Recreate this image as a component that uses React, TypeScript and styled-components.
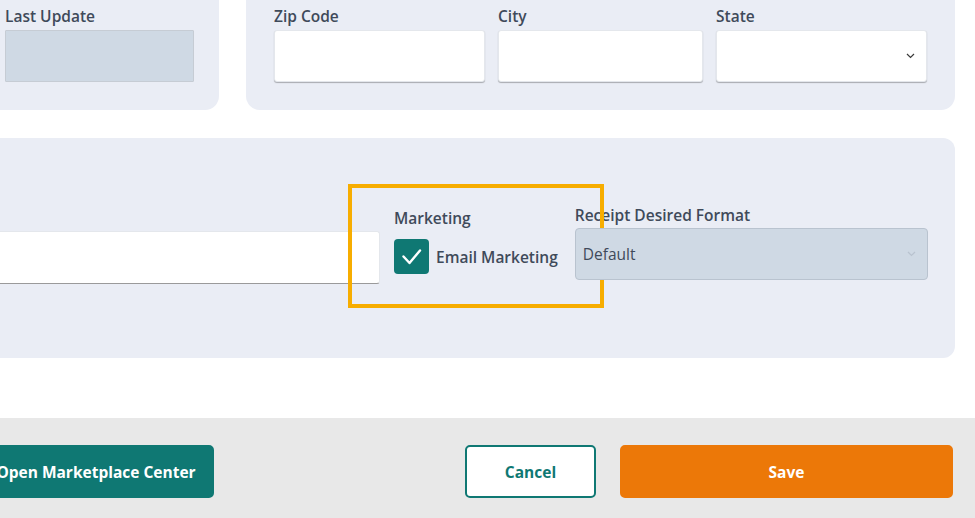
import React from "react";
import styled, { createGlobalStyle } from "styled-components";

const GlobalStyle = createGlobalStyle`
  html, body {
    margin: 0;
    padding: 0;
    background: #ffffff;
    overflow: hidden;
    font-family: "Open Sans", "Liberation Sans", sans-serif;
  }
  * {
    box-sizing: border-box;
  }
`;

const palette = {
  card: "#eaedf5",
  disabled: "#cfd9e4",
  label: "#3f4a5a",
  teal: "#0f7873",
  orange: "#ec7808",
  footer: "#e8e8e8",
  highlight: "#f7ad00",
};

const Page = styled.div`
  width: 1055px;
  margin: -20px 0 0 -100px;
`;

const TopRow = styled.div`
  display: flex;
  gap: 27px;
  height: 130px;
`;

const Card = styled.section<{ $width?: number }>`
  flex: ${(p) => (p.$width ? `0 0 ${p.$width}px` : "1")};
  display: flex;
  align-items: flex-start;
  gap: 13px;
  background-color: ${palette.card};
  border-radius: 0 0 14px 14px;
`;

const LeftCard = styled(Card)`
  padding: 26px 25px 0 105px;
`;

const AddressCard = styled(Card)`
  padding: 26px 28px 0 28px;
`;

const Field = styled.div<{ $width: number }>`
  display: flex;
  flex-direction: column;
  gap: 4px;
  width: ${(p) => p.$width}px;
  flex: 0 0 ${(p) => p.$width}px;
`;

const Label = styled.label`
  display: block;
  height: 20px;
  line-height: 20px;
  font-size: 15.5px;
  font-weight: 600;
  color: ${palette.label};
  white-space: nowrap;
`;

const TextInput = styled.div<{ $disabled?: boolean; $height?: number }>`
  position: relative;
  height: ${(p) => p.$height ?? 52}px;
  background-color: ${(p) => (p.$disabled ? palette.disabled : "#ffffff")};
  border: 1px solid ${(p) => (p.$disabled ? "#c6ccd4" : "#e4e7ec")};
  border-radius: ${(p) => (p.$disabled ? 1 : 3)}px;
  box-shadow: ${(p) => (p.$disabled ? "none" : "0 1px 1px rgba(0, 0, 0, 0.28)")};
`;

const Chevron = styled.svg<{ $faint?: boolean }>`
  position: absolute;
  right: 11px;
  top: 50%;
  margin-top: -3px;
  width: 9px;
  height: 6px;
  stroke: ${(p) => (p.$faint ? "#b9c3cf" : "#3a3a3a")};
`;

const ChevronIcon = ({ faint }: { faint?: boolean }) => (
  <Chevron $faint={faint} viewBox="0 0 9 6" fill="none">
    <path d="M1 1l3.5 3.5L8 1" strokeWidth="1.2" />
  </Chevron>
);

const MiddleCard = styled.section`
  display: flex;
  align-items: flex-start;
  height: 220px;
  margin-top: 28px;
  padding: 67px 28px 0 28px;
  background-color: ${palette.card};
  border-radius: 0 12px 12px 0;
`;

const NotesInput = styled.div`
  flex: 0 0 452px;
  height: 53px;
  margin-top: 26px;
  background-color: #ffffff;
  border: 1px solid #e4e7ec;
  border-bottom: 1px solid #9a9a9a;
  border-radius: 3px;
`;

const MarketingGroup = styled.div`
  position: relative;
  display: flex;
  flex-direction: column;
  gap: 11px;
  margin: 3px 0 0 14px;
`;

const Highlight = styled.div`
  position: absolute;
  left: -46px;
  right: -46px;
  top: -24px;
  bottom: -34px;
  border: 4px solid ${palette.highlight};
  pointer-events: none;
`;

const CheckRow = styled.div`
  display: flex;
  align-items: center;
  gap: 7px;
  height: 35px;
`;

const CheckBox = styled.span`
  display: inline-flex;
  align-items: center;
  justify-content: center;
  width: 35px;
  height: 35px;
  border-radius: 4px;
  background-color: ${palette.teal};
`;

const CheckText = styled.span`
  font-size: 15.5px;
  font-weight: 600;
  color: ${palette.label};
  white-space: nowrap;
`;

const SelectField = styled(Field)`
  margin-left: 17px;
  gap: 3px;
`;

const SelectBox = styled.div`
  position: relative;
  display: flex;
  align-items: center;
  height: 52px;
  padding: 0 7px;
  background-color: ${palette.disabled};
  border: 1px solid #b9c3cf;
  border-radius: 4px;
  font-size: 15.5px;
  color: ${palette.label};
`;

const Footer = styled.footer`
  display: flex;
  align-items: flex-start;
  height: 120px;
  margin: 60px -20px 0 0;
  padding: 27px 22px 0 78px;
  background-color: ${palette.footer};
`;

const Button = styled.button<{ $variant: "teal" | "outline" | "orange"; $width: number }>`
  flex: 0 0 ${(p) => p.$width}px;
  height: 53px;
  border-radius: 5px;
  font-family: inherit;
  font-size: 15.5px;
  font-weight: 700;
  cursor: pointer;
  border: 2px solid
    ${(p) => (p.$variant === "orange" ? palette.orange : palette.teal)};
  background-color: ${(p) =>
    p.$variant === "teal" ? palette.teal : p.$variant === "orange" ? palette.orange : "#ffffff"};
  color: ${(p) => (p.$variant === "outline" ? palette.teal : "#ffffff")};
  white-space: nowrap;
`;

const Spacer = styled.div`
  flex: 1;
`;

const ButtonGap = styled.div`
  flex: 0 0 24px;
`;

const App: React.FC = () => {
  return (
    <>
      <GlobalStyle />
      <Page>
        <TopRow>
          <LeftCard $width={319}>
            <Field $width={189}>
              <Label>Last Update</Label>
              <TextInput $disabled />
            </Field>
          </LeftCard>
          <AddressCard>
            <Field $width={211}>
              <Label>Zip Code</Label>
              <TextInput />
            </Field>
            <Field $width={205}>
              <Label>City</Label>
              <TextInput />
            </Field>
            <Field $width={211}>
              <Label>State</Label>
              <TextInput>
                <ChevronIcon />
              </TextInput>
            </Field>
          </AddressCard>
        </TopRow>

        <MiddleCard>
          <NotesInput />
          <MarketingGroup>
            <Label>Marketing</Label>
            <CheckRow>
              <CheckBox>
                <svg width="35" height="35" viewBox="0 0 35 35" fill="none">
                  <path
                    d="M9.5 17.5l6 6.5L26 11.5"
                    stroke="#ffffff"
                    strokeWidth="2.4"
                    strokeLinecap="round"
                    strokeLinejoin="round"
                  />
                </svg>
              </CheckBox>
              <CheckText>Email Marketing</CheckText>
            </CheckRow>
            <Highlight />
          </MarketingGroup>
          <SelectField $width={353}>
            <Label>Receipt Desired Format</Label>
            <SelectBox>
              Default
              <ChevronIcon faint />
            </SelectBox>
          </SelectField>
        </MiddleCard>

        <Footer>
          <Button $variant="teal" $width={236}>
            Open Marketplace Center
          </Button>
          <Spacer />
          <Button $variant="outline" $width={131}>
            Cancel
          </Button>
          <ButtonGap />
          <Button $variant="orange" $width={333}>
            Save
          </Button>
        </Footer>
      </Page>
    </>
  );
};

export default App;
